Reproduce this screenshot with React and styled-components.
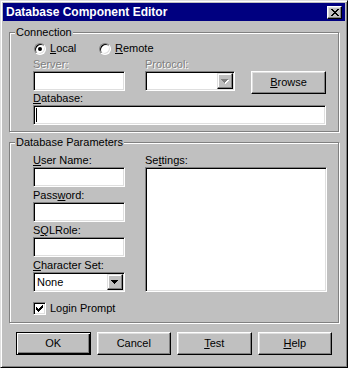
import React from "react";
import styled, { createGlobalStyle, css } from "styled-components";

const Global = createGlobalStyle`
  html, body { margin: 0; padding: 0; background: #c0c0c0; }
  body { font-family: "Liberation Sans", Arial, sans-serif; }
`;

const Window = styled.div`
  box-sizing: border-box;
  width: 348px;
  height: 368px;
  background: #c0c0c0;
  border: 1px solid;
  border-color: #dfdfdf #000 #000 #dfdfdf;
  box-shadow: inset 1px 1px #fff, inset -1px -1px #808080;
  padding: 2px;
  display: flex;
  flex-direction: column;
  font-family: "Liberation Sans", Arial, sans-serif;
  font-size: 11px;
  line-height: 13px;
  color: #000;
`;

const TitleBar = styled.div`
  height: 18px;
  background: #000080;
  display: flex;
  align-items: center;
  padding: 0 3px 0 3px;
`;

const Title = styled.div`
  flex: 1;
  color: #fff;
  font-weight: bold;
  font-size: 12px;
  line-height: 18px;
  white-space: nowrap;
`;

const CaptionButton = styled.div`
  box-sizing: border-box;
  width: 15px;
  height: 13px;
  background: #c0c0c0;
  border: 1px solid;
  border-color: #fff #000 #000 #fff;
  box-shadow: inset -1px -1px #808080, inset 1px 1px #dfdfdf;
  display: flex;
  align-items: center;
  justify-content: center;
`;

const Body = styled.div`
  flex: 1;
  display: flex;
  flex-direction: column;
  padding: 5px 6px 0;
`;

const Group = styled.fieldset`
  margin: 0 0 ${(p) => p.$mb}px;
  padding: ${(p) => p.$pt}px 5px ${(p) => p.$pb}px;
  border: 1px solid #808080;
  box-shadow: inset 1px 1px #fff, 1px 1px #fff;
  min-width: 0;
`;

const Legend = styled.legend`
  padding: 0 1px;
  margin: 0;
  background: #c0c0c0;
  line-height: 13px;
`;

const GroupInner = styled.div`
  padding-left: 18px;
  display: flex;
  flex-direction: ${(p) => (p.$row ? "row" : "column")};
  gap: ${(p) => p.$gap || 0}px;
`;

const RadioRow = styled.div`
  display: flex;
  height: 13px;
  align-items: center;
  padding-left: 1px;
`;

const RadioOption = styled.div`
  display: flex;
  align-items: center;
  gap: 4px;
  width: ${(p) => (p.$w ? `${p.$w}px` : "auto")};
`;

const RadioCircle = styled.span`
  box-sizing: border-box;
  width: 12px;
  height: 12px;
  border-radius: 50%;
  background: #fff;
  border: 1px solid;
  border-color: #808080 #fff #fff #808080;
  box-shadow: inset 1px 1px #000, inset -1px -1px #dfdfdf;
  display: flex;
  align-items: center;
  justify-content: center;
  &::after {
    content: "";
    width: 4px;
    height: 4px;
    border-radius: 50%;
    background: ${(p) => (p.$checked ? "#000" : "transparent")};
  }
`;

const ConnRow = styled.div`
  display: flex;
  align-items: flex-start;
  height: 33px;
  margin-top: 3px;
`;

const Field = styled.div`
  display: flex;
  flex-direction: column;
  width: ${(p) => p.$w}px;
  margin-left: ${(p) => p.$ml || 0}px;
  margin-top: ${(p) => p.$mt || 0}px;
`;

const Label = styled.div`
  height: 13px;
  line-height: 13px;
  white-space: nowrap;
  ${(p) =>
    p.$disabled &&
    css`
      color: #808080;
      text-shadow: 1px 1px 0 #fff;
    `}
`;

const U = styled.span`
  text-decoration: underline;
`;

const TextBox = styled.div`
  box-sizing: border-box;
  width: ${(p) => p.$w}px;
  height: ${(p) => p.$h || 20}px;
  background: #fff;
  border: 1px solid;
  border-color: #808080 #fff #fff #808080;
  box-shadow: inset 1px 1px #000, inset -1px -1px #dfdfdf;
  padding: 2px 1px;
  display: flex;
`;

const Caret = styled.span`
  width: 1px;
  height: 14px;
  background: #000;
  margin-left: 1px;
`;

const Combo = styled.div`
  box-sizing: border-box;
  width: ${(p) => p.$w}px;
  height: 20px;
  background: #fff;
  border: 1px solid;
  border-color: #808080 #fff #fff #808080;
  box-shadow: inset 1px 1px #000, inset -1px -1px #dfdfdf;
  padding: 1px;
  display: flex;
  align-items: center;
`;

const ComboText = styled.div`
  flex: 1;
  padding-left: 2px;
  line-height: 16px;
`;

const DropButton = styled.div`
  box-sizing: border-box;
  width: 16px;
  height: 16px;
  background: #c0c0c0;
  border: 1px solid;
  border-color: #dfdfdf #000 #000 #dfdfdf;
  box-shadow: inset -1px -1px #808080, inset 1px 1px #fff;
  display: flex;
  align-items: center;
  justify-content: center;
`;

const Button = styled.div`
  box-sizing: border-box;
  height: 23px;
  width: ${(p) => (p.$w ? `${p.$w}px` : "auto")};
  margin-left: ${(p) => p.$ml || 0}px;
  margin-top: ${(p) => p.$mt || 0}px;
  background: #c0c0c0;
  border: 1px solid;
  border-color: #fff #000 #000 #fff;
  box-shadow: inset -1px -1px #808080, inset 1px 1px #dfdfdf;
  display: flex;
  align-items: center;
  justify-content: center;
  flex-shrink: 0;
  ${(p) =>
    p.$default &&
    css`
      border-color: #000;
      box-shadow: inset 1px 1px #fff, inset -1px -1px #000,
        inset -2px -2px #808080;
    `}
`;

const Column = styled.div`
  display: flex;
  flex-direction: column;
  gap: ${(p) => p.$gap || 0}px;
`;

const CheckRow = styled.div`
  display: flex;
  align-items: center;
  gap: 4px;
  height: 13px;
  margin-top: 8px;
`;

const CheckBox = styled.span`
  box-sizing: border-box;
  width: 13px;
  height: 13px;
  background: #fff;
  border: 1px solid;
  border-color: #808080 #fff #fff #808080;
  box-shadow: inset 1px 1px #000, inset -1px -1px #dfdfdf;
  display: flex;
  align-items: center;
  justify-content: center;
`;

const ButtonRow = styled.div`
  display: grid;
  grid-template-columns: repeat(4, 1fr);
  column-gap: 6px;
  width: 316px;
  margin-left: 7px;
`;

const CloseGlyph = () => (
  <svg width="8" height="7" viewBox="0 0 8 7" shapeRendering="crispEdges">
    <path
      fill="#000"
      d="M0 0h2v1h-2zM6 0h2v1h-2zM1 1h2v1h-2zM5 1h2v1h-2zM2 2h4v1h-4zM3 3h2v1h-2zM2 4h4v1h-4zM1 5h2v1h-2zM5 5h2v1h-2zM0 6h2v1h-2zM6 6h2v1h-2z"
    />
  </svg>
);

const ARROW = "M0 0h7v1h-7zM1 1h5v1h-5zM2 2h3v1h-3zM3 3h1v1h-1z";

const Arrow = ({ disabled }) => (
  <svg width="8" height="5" viewBox="0 0 8 5" shapeRendering="crispEdges">
    {disabled && <path fill="#fff" transform="translate(1 1)" d={ARROW} />}
    <path fill={disabled ? "#808080" : "#000"} d={ARROW} />
  </svg>
);

const CheckMark = () => (
  <svg width="7" height="7" viewBox="0 0 7 7" shapeRendering="crispEdges">
    <path
      fill="#000"
      d="M6 0h1v1h-1zM5 1h2v1h-2zM0 2h1v1h-1zM4 2h3v1h-3zM0 3h2v1h-2zM3 3h3v1h-3zM0 4h5v1h-5zM1 5h3v1h-3zM2 6h1v1h-1z"
    />
  </svg>
);

export default function App() {
  return (
    <>
      <Global />
      <Window>
        <TitleBar>
          <Title>Database Component Editor</Title>
          <CaptionButton>
            <CloseGlyph />
          </CaptionButton>
        </TitleBar>
        <Body>
          <Group $pt={3} $pb={6} $mb={4}>
            <Legend>Connection</Legend>
            <GroupInner>
              <RadioRow>
                <RadioOption $w={65}>
                  <RadioCircle $checked />
                  <span>
                    <U>L</U>ocal
                  </span>
                </RadioOption>
                <RadioOption>
                  <RadioCircle />
                  <span>
                    <U>R</U>emote
                  </span>
                </RadioOption>
              </RadioRow>
              <ConnRow>
                <Field $w={92}>
                  <Label $disabled>Server:</Label>
                  <TextBox $w={92} />
                </Field>
                <Field $w={90} $ml={20}>
                  <Label $disabled>Protocol:</Label>
                  <Combo $w={90}>
                    <ComboText />
                    <DropButton>
                      <Arrow disabled />
                    </DropButton>
                  </Combo>
                </Field>
                <Button $w={75} $ml={16} $mt={13}>
                  <span>
                    <U>B</U>rowse
                  </span>
                </Button>
              </ConnRow>
              <Field $w={293} $mt={1}>
                <Label>
                  <U>D</U>atabase:
                </Label>
                <TextBox $w={293}>
                  <Caret />
                </TextBox>
              </Field>
            </GroupInner>
          </Group>

          <Group $pt={5} $pb={7} $mb={9}>
            <Legend>Database Parameters</Legend>
            <GroupInner $row $gap={20}>
              <Column $gap={2}>
                <Field $w={92}>
                  <Label>
                    <U>U</U>ser Name:
                  </Label>
                  <TextBox $w={92} />
                </Field>
                <Field $w={92}>
                  <Label>
                    Pass<U>w</U>ord:
                  </Label>
                  <TextBox $w={92} />
                </Field>
                <Field $w={92}>
                  <Label>
                    S<U>Q</U>LRole:
                  </Label>
                  <TextBox $w={92} />
                </Field>
                <Field $w={92}>
                  <Label>
                    <U>C</U>haracter Set:
                  </Label>
                  <Combo $w={92}>
                    <ComboText>None</ComboText>
                    <DropButton>
                      <Arrow />
                    </DropButton>
                  </Combo>
                </Field>
                <CheckRow>
                  <CheckBox>
                    <CheckMark />
                  </CheckBox>
                  <span>Login Prompt</span>
                </CheckRow>
              </Column>
              <Field $w={182}>
                <Label>
                  Se<U>t</U>tings:
                </Label>
                <TextBox $w={182} $h={125} />
              </Field>
            </GroupInner>
          </Group>

          <ButtonRow>
            <Button $default>OK</Button>
            <Button>Cancel</Button>
            <Button>
              <span>
                <U>T</U>est
              </span>
            </Button>
            <Button>
              <span>
                <U>H</U>elp
              </span>
            </Button>
          </ButtonRow>
        </Body>
      </Window>
    </>
  );
}
